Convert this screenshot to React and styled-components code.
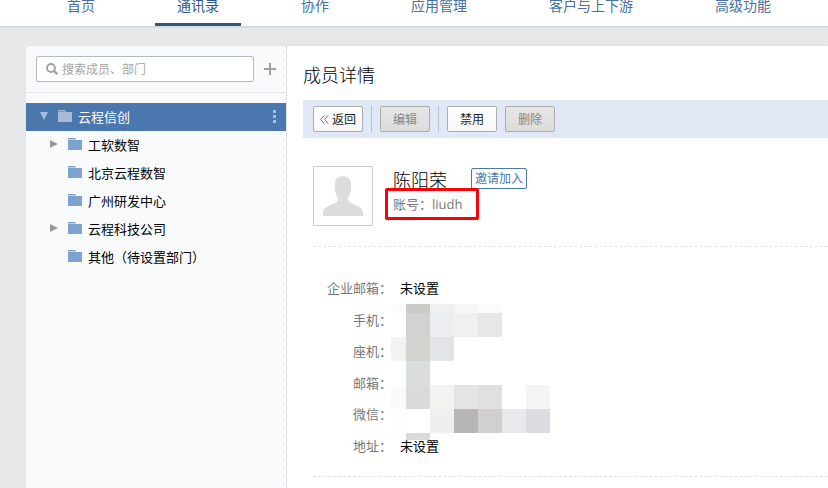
import React, { useState } from "react";
import styled, { createGlobalStyle } from "styled-components";

const NAV = ["首页", "通讯录", "协作", "应用管理", "客户与上下游", "高级功能"];

const DEPARTMENTS = [
  { name: "工软数智", expandable: true },
  { name: "北京云程数智" },
  { name: "广州研发中心" },
  { name: "云程科技公司", expandable: true },
  { name: "其他（待设置部门）" },
];

const FIELDS = [
  { label: "企业邮箱", value: "未设置" },
  { label: "手机" },
  { label: "座机" },
  { label: "邮箱" },
  { label: "微信" },
  { label: "地址", value: "未设置" },
];

// x, y, width, height, colour
const MOSAIC = [
  [0, 0, 15, 9, "#fbfbfb"],
  [15, 0, 24, 9, "#cbcac9"],
  [39, 0, 24, 9, "#f0f0f0"],
  [63, 0, 24, 9, "#f6f6f6"],
  [87, 0, 24, 9, "#fbfcfe"],
  [15, 9, 24, 24, "#d1d3d2"],
  [39, 9, 24, 24, "#ebedf0"],
  [63, 9, 24, 24, "#f0f0f0"],
  [87, 9, 24, 24, "#e6e7e9"],
  [0, 33, 15, 24, "#f2f2f1"],
  [15, 33, 24, 24, "#d3d3d0"],
  [39, 33, 24, 24, "#e3e4e7"],
  [15, 57, 24, 24, "#dadfde"],
  [0, 81, 15, 24, "#fafaf9"],
  [15, 81, 24, 24, "#dadada"],
  [39, 81, 24, 24, "#f3f3f1"],
  [63, 81, 24, 24, "#e4e4e4"],
  [87, 81, 24, 24, "#e0e0e0"],
  [135, 81, 24, 24, "#f4f5f7"],
  [0, 105, 15, 24, "#fefefe"],
  [39, 105, 24, 24, "#efeff0"],
  [63, 105, 24, 24, "#b7b5b6"],
  [87, 105, 24, 24, "#d1cfd0"],
  [111, 105, 24, 24, "#e8e9ea"],
  [135, 105, 24, 24, "#dcdde2"],
  [0, 129, 15, 7, "#fdfdfb"],
  [15, 129, 24, 7, "#dadada"],
  [39, 129, 24, 7, "#fafdfc"],
];

const FolderIcon = () => (
  <svg width="14" height="12" viewBox="0 0 14 12" fill="currentColor" aria-hidden="true">
    <path d="M0 0h7l1.400 1.400H0z" />
    <path d="M0 2h14v10H0z" />
  </svg>
);

const SearchIcon = () => (
  <svg width="12" height="12" viewBox="0 0 12 12" fill="none" stroke="#a2a2a2" strokeWidth="2" aria-hidden="true">
    <circle cx="5" cy="5" r="3.9" />
    <path d="M7.8 7.8l3.4 3.4" strokeWidth="2.4" />
  </svg>
);

const App = () => {
  const [keyword, setKeyword] = useState("");

  return (
    <Page>
      <GlobalStyle />
      <Header>
        {NAV.map((name) => (
          <NavLink href="#" key={name} $active={name === "通讯录"}>
            {name}
          </NavLink>
        ))}
      </Header>

      <Panel>
        <Sidebar>
          <SearchRow>
            <SearchBox>
              <SearchIcon />
              <SearchInput
                aria-label="搜索成员、部门"
                placeholder="搜索成员、部门"
                value={keyword}
                onChange={(e) => setKeyword(e.target.value)}
              />
            </SearchBox>
            <IconButton aria-label="添加">
              <svg width="12" height="12" viewBox="0 0 12 12" stroke="#a3a3a3" strokeWidth="2">
                <path d="M6 0v12M0 6h12" />
              </svg>
            </IconButton>
          </SearchRow>

          <Tree>
            <TreeRow $active>
              <Caret $active>
                <svg width="8" height="8" viewBox="0 0 8 8" fill="currentColor">
                  <path d="M0 0h8L4 8z" />
                </svg>
              </Caret>
              <FolderIcon />
              <TreeName $active>云程信创</TreeName>
              <IconButton aria-label="更多">
                <svg width="3" height="13" viewBox="0 0 3 13" fill="#a9bedb">
                  <path d="M0 0h3v3H0zM0 5h3v3H0zM0 10h3v3H0z" />
                </svg>
              </IconButton>
            </TreeRow>
            {DEPARTMENTS.map((item) => (
              <TreeRow key={item.name} $child>
                <Caret>
                  {item.expandable && (
                    <svg width="8" height="8" viewBox="0 0 8 8" fill="currentColor">
                      <path d="M0 0l8 4-8 4z" />
                    </svg>
                  )}
                </Caret>
                <FolderIcon />
                <TreeName>{item.name}</TreeName>
              </TreeRow>
            ))}
          </Tree>
        </Sidebar>

        <Main>
          <Title>成员详情</Title>
          <Toolbar>
            <Button>
              <svg width="9" height="9" viewBox="0 0 9 9" fill="none" stroke="#777" aria-hidden="true">
                <path d="M4.2 0.3L0.7 4.5l3.5 4.2M8.2 0.3L4.7 4.5l3.5 4.2" />
              </svg>
              返回
            </Button>
            <Divider />
            <Button disabled>编辑</Button>
            <Divider />
            <Button>禁用</Button>
            <Button disabled>删除</Button>
          </Toolbar>

          <Profile>
            <Avatar>
              <svg width="40" height="40" viewBox="0 0 40 40" fill="#dcdcdc" aria-hidden="true">
                <path d="M20 0C25.400 0 28.200 3.600 28.200 9.500C28.200 14.500 27.500 18 25.500 21C24 23.500 24.500 25.500 27.500 26.800L34.500 30C38.500 32 40 34 40 37.500V40H0V37.500C0 34 1.500 32 5.500 30L12.500 26.800C15.500 25.500 16 23.500 14.500 21C12.500 18 11.800 14.500 11.800 9.500C11.800 3.600 14.600 0 20 0z" />
              </svg>
            </Avatar>
            <Identity>
              <NameRow>
                <Name>陈阳荣</Name>
                <InviteButton>邀请加入</InviteButton>
              </NameRow>
              <Account>
                账号：liudh
                <Highlight />
              </Account>
            </Identity>
          </Profile>

          <Details>
            {FIELDS.map((field) => (
              <Field key={field.label}>
                <dt>{field.label}：</dt>
                <dd>{field.value}</dd>
              </Field>
            ))}
            <Mosaic width="159" height="136" viewBox="0 0 159 136" shapeRendering="crispEdges" aria-hidden="true">
              {MOSAIC.map(([x, y, w, h, fill]) => (
                <rect key={`${x}-${y}`} x={x} y={y} width={w} height={h} fill={fill} />
              ))}
            </Mosaic>
          </Details>
        </Main>
      </Panel>
    </Page>
  );
};

const GlobalStyle = createGlobalStyle`
  * {
    box-sizing: border-box;
  }

  body {
    margin: 0;
    background: #e7e8ea;
    overflow: hidden;
  }

  body, button, input {
    font-family: "Open Sans", "Noto Sans CJK SC", sans-serif;
    font-size: 13px;
  }
`;

const Page = styled.div`
  display: flex;
  flex-direction: column;
  min-height: 100vh;
  color: #000;
`;

const Header = styled.nav`
  display: flex;
  gap: 38px;
  padding-left: 45px;
  background: #fff;
  border-bottom: 1px solid #d5d6d8;
  box-shadow: 0 1px 1px rgba(0, 0, 0, 0.04);
`;

const NavLink = styled.a`
  padding: 0 22px 11px;
  border-bottom: 3px solid ${(props) => (props.$active ? "#2f5785" : "transparent")};
  color: ${(props) => (props.$active ? "#2f5785" : "#4a709f")};
  font-size: 14px;
  line-height: 12px;
  text-decoration: none;
  white-space: nowrap;
`;

const Panel = styled.div`
  display: flex;
  flex: 1;
  margin: 19px 0 0 26px;
  background: #fff;
  border-top-left-radius: 4px;
  box-shadow: 0 0 2px rgba(0, 0, 0, 0.08);
`;

const Sidebar = styled.aside`
  flex: 0 0 261px;
  background: #f9fafc;
  border-right: 1px dotted #ccd0d6;
  border-top-left-radius: 4px;
`;

const SearchRow = styled.div`
  display: flex;
  align-items: center;
  gap: 10px;
  padding: 10px;
  border-bottom: 1px solid #e3e6e9;
`;

const SearchBox = styled.label`
  display: flex;
  flex: 1;
  align-items: center;
  gap: 4px;
  height: 26px;
  padding: 0 9px;
  background: #fff;
  border: 1px solid #b2bac8;
  border-radius: 2px;
`;

const SearchInput = styled.input`
  flex: 1;
  min-width: 0;
  padding: 0;
  border: 0;
  outline: 0;
  background: none;
  font-size: 12px;

  &::placeholder {
    color: #a3a3a3;
  }
`;

const IconButton = styled.button`
  display: flex;
  padding: 0;
  border: 0;
  background: none;
  cursor: pointer;
`;

const Tree = styled.ul`
  margin: 10px 0 0;
  padding: 0;
  list-style: none;
`;

const TreeRow = styled.li`
  display: flex;
  align-items: center;
  height: 28px;
  padding: 0 10px 2px ${(props) => (props.$child ? 24 : 14)}px;
  background: ${(props) => (props.$active ? "#4a78ae" : "transparent")};
  color: ${(props) => (props.$active ? "#a7bbd8" : "#7fa3d1")};

  ${IconButton} {
    margin-left: auto;
  }
`;

const Caret = styled.span`
  display: flex;
  width: 18px;
  color: ${(props) => (props.$active ? "#a7bbd8" : "#999")};
`;

const TreeName = styled.span`
  margin-left: 6px;
  color: ${(props) => (props.$active ? "#fff" : "#000")};
`;

const Main = styled.main`
  flex: 1;
  min-width: 0;
  padding-left: 16px;
`;

const Title = styled.h1`
  margin: 0;
  padding: 17px 0 13px;
  font-size: 18px;
  font-weight: 300;
  line-height: 24px;
`;

const Toolbar = styled.div`
  display: flex;
  align-items: center;
  gap: 8px;
  padding: 6px 10px;
  background: #dfe8f4;
`;

const Button = styled.button`
  display: flex;
  align-items: center;
  justify-content: center;
  gap: 3px;
  width: 50px;
  height: 26px;
  padding: 0;
  border: 1px solid #acadae;
  border-radius: 2px;
  background: linear-gradient(#fff, #f7f7f7);
  color: #222;
  font-size: 12px;

  &:disabled {
    background: linear-gradient(#e6e6e6, #dcdcdc);
    color: #868686;
  }
`;

const Divider = styled.span`
  width: 1px;
  height: 26px;
  background: #b5c0d0;
`;

const Profile = styled.section`
  display: flex;
  gap: 20px;
  margin-left: 10px;
  padding: 28px 0 20px;
  border-bottom: 1px dashed #e2e2e2;
`;

const Avatar = styled.div`
  display: flex;
  align-items: center;
  justify-content: center;
  width: 60px;
  height: 60px;
  border: 1px solid #ccc;
`;

const Identity = styled.div`
  display: flex;
  flex-direction: column;
  padding-top: 2px;
`;

const NameRow = styled.div`
  display: flex;
  gap: 24px;
  align-items: flex-start;
`;

const Name = styled.h2`
  margin: 0;
  font-size: 18px;
  font-weight: 300;
  line-height: 24px;
`;

const InviteButton = styled.button`
  height: 21px;
  padding: 0 3px;
  border: 1px solid #4a78ae;
  border-radius: 2px;
  background: #fff;
  color: #4a78ae;
  font-size: 12px;
  line-height: 19px;
`;

const Account = styled.div`
  position: relative;
  align-self: flex-start;
  color: #787878;
  line-height: 24px;
`;

const Highlight = styled.span`
  position: absolute;
  top: -4px;
  left: -8px;
  width: 94px;
  height: 32px;
  border: 3px solid #fb0007;
  border-radius: 2px;
`;

const Details = styled.dl`
  position: relative;
  display: grid;
  align-content: space-between;
  min-height: 230px;
  margin: 0 0 0 10px;
  padding: 31px 0 20px;
  border-bottom: 1px dashed #e2e2e2;
`;

const Field = styled.div`
  display: flex;
  gap: 8px;
  line-height: 20px;

  dt {
    width: 79px;
    color: #787878;
    text-align: right;
    white-space: nowrap;
  }

  dd {
    margin: 0;
  }
`;

const Mosaic = styled.svg`
  position: absolute;
  top: 57px;
  left: 78px;
`;

export default App;
